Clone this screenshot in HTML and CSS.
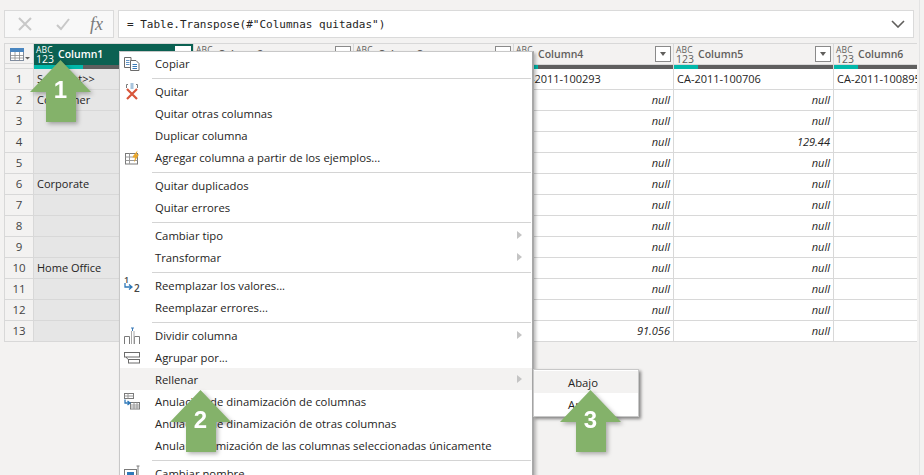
FILE: index.html
```html
<!DOCTYPE html>
<html lang="es">
<head>
<meta charset="utf-8">
<title>Power Query</title>
<link rel="stylesheet" href="styles.css">
</head>
<body>
<div class="app">
  <div class="formula-row">
    <div class="formula-btns">
      <svg class="fb-icon" width="16" height="16" viewBox="0 0 16 16"><path d="M2 2L14 14M14 2L2 14" stroke="#c8c8c8" stroke-width="2" fill="none"/></svg>
      <svg class="fb-icon" width="16" height="16" viewBox="0 0 16 16"><path d="M2 9L6 13L14 3" stroke="#c8c8c8" stroke-width="2" fill="none"/></svg>
      <span class="fx">fx</span>
    </div>
    <div class="formula-box">
      <span class="formula-text">= Table.Transpose(#"Columnas quitadas")</span>
      <svg width="14" height="8" viewBox="0 0 14 8"><path d="M1 1L7 7L13 1" stroke="#605e5c" stroke-width="1.6" fill="none"/></svg>
    </div>
  </div>

  <div class="grid">
    <div class="corner">
      <svg width="20" height="13" viewBox="0 0 20 13"><rect x=".5" y=".5" width="13" height="12" fill="#fff" stroke="#7f8ca0"/><rect x="0" y="0" width="14" height="4" fill="#4a86c0"/><path d="M5 4V13M9.500 4V13M0 7.500H14M0 10H14" stroke="#8a8a8a" stroke-width=".8"/><path d="M15 9H20L17.500 11.500Z" fill="#605e5c"/></svg>
    </div>
    <div class="head selected"><span class="type"><b>ABC</b><b>123</b></span><span class="name">Column1</span><span class="filter"></span><span class="quality"><i class="wide"></i></span></div>
    <div class="head"><span class="type"><b>ABC</b><b>123</b></span><span class="name">Column2</span><span class="filter"></span><span class="quality"><i></i></span></div>
    <div class="head"><span class="type"><b>ABC</b><b>123</b></span><span class="name">Column3</span><span class="filter"></span><span class="quality"><i></i></span></div>
    <div class="head"><span class="type"><b>ABC</b><b>123</b></span><span class="name">Column4</span><span class="filter"></span><span class="quality"><i></i></span></div>
    <div class="head"><span class="type"><b>ABC</b><b>123</b></span><span class="name">Column5</span><span class="filter"></span><span class="quality"><i></i></span></div>
    <div class="head clip"><span class="type"><b>ABC</b><b>123</b></span><span class="name">Column6</span><span class="quality"><i></i></span></div>

    <div class="num">1</div><div class="cell sel">Segment&gt;&gt;</div><div class="cell">CA-2011-100006</div><div class="cell">CA-2011-100090</div><div class="cell">CA-2011-100293</div><div class="cell">CA-2011-100706</div><div class="cell last">CA-2011-100895</div>
    <div class="num">2</div><div class="cell sel">Consumer</div><div class="cell nul">null</div><div class="cell nul">null</div><div class="cell nul">null</div><div class="cell nul">null</div><div class="cell last"></div>
    <div class="num">3</div><div class="cell sel"></div><div class="cell nul">null</div><div class="cell nul">null</div><div class="cell nul">null</div><div class="cell nul">null</div><div class="cell last"></div>
    <div class="num">4</div><div class="cell sel"></div><div class="cell nul">null</div><div class="cell nul">null</div><div class="cell nul">null</div><div class="cell nul">129.44</div><div class="cell last"></div>
    <div class="num">5</div><div class="cell sel"></div><div class="cell nul">null</div><div class="cell nul">null</div><div class="cell nul">null</div><div class="cell nul">null</div><div class="cell last"></div>
    <div class="num">6</div><div class="cell sel">Corporate</div><div class="cell nul">null</div><div class="cell nul">null</div><div class="cell nul">null</div><div class="cell nul">null</div><div class="cell last"></div>
    <div class="num">7</div><div class="cell sel"></div><div class="cell nul">null</div><div class="cell nul">null</div><div class="cell nul">null</div><div class="cell nul">null</div><div class="cell last"></div>
    <div class="num">8</div><div class="cell sel"></div><div class="cell nul">null</div><div class="cell nul">null</div><div class="cell nul">null</div><div class="cell nul">null</div><div class="cell last"></div>
    <div class="num">9</div><div class="cell sel"></div><div class="cell nul">null</div><div class="cell nul">null</div><div class="cell nul">null</div><div class="cell nul">null</div><div class="cell last"></div>
    <div class="num">10</div><div class="cell sel">Home Office</div><div class="cell nul">null</div><div class="cell nul">null</div><div class="cell nul">null</div><div class="cell nul">null</div><div class="cell last"></div>
    <div class="num">11</div><div class="cell sel"></div><div class="cell nul">null</div><div class="cell nul">null</div><div class="cell nul">null</div><div class="cell nul">null</div><div class="cell last"></div>
    <div class="num">12</div><div class="cell sel"></div><div class="cell nul">null</div><div class="cell nul">null</div><div class="cell nul">null</div><div class="cell nul">null</div><div class="cell last"></div>
    <div class="num">13</div><div class="cell sel"></div><div class="cell nul">null</div><div class="cell nul">null</div><div class="cell nul">91.056</div><div class="cell nul">null</div><div class="cell last"></div>
  </div>
</div>

<div class="menu">
  <div class="item"><span class="ic"><svg width="18" height="18" viewBox="0 0 18 18"><path d="M1.500 3.500H8V13.500H1.500Z" fill="#fff" stroke="#6b6b6b"/><path d="M3 6.500H6.500M3 8.500H6.500M3 10.500H6.500" stroke="#3a7ab8" stroke-width=".8"/><path d="M7.500 6.500H13L16 9.500V16.500H7.500Z" fill="#fff" stroke="#6b6b6b"/><path d="M9.500 10.500H14M9.500 12.500H14M9.500 14.500H14" stroke="#3a7ab8"/></svg></span>Copiar</div>
  <div class="sep"></div>
  <div class="item"><span class="ic"><svg width="18" height="18" viewBox="0 0 18 18"><path d="M3.500 6V2.500H5M13 2.500H14.500V6" stroke="#7a7a7a" fill="none"/><rect x="7.500" y="1" width="3" height="6" fill="#a9c4dc"/><path d="M4 7L14 17M14 7L4 17" stroke="#d8553a" stroke-width="2.200"/></svg></span>Quitar</div>
  <div class="item"><span class="ic"></span>Quitar otras columnas</div>
  <div class="item"><span class="ic"></span>Duplicar columna</div>
  <div class="item"><span class="ic"><svg width="18" height="18" viewBox="0 0 18 18"><rect x="2.500" y="5.500" width="12" height="10.500" fill="#fff" stroke="#7a7a7a"/><path d="M2.500 9H14.500M2.500 12.500H14.500M6.500 5.500V16" stroke="#9a9a9a"/><path d="M10 8L14.500 2.500L13.500 6.500H16L11 14.500L12 9.500H9.500Z" fill="#eaa72a"/></svg></span>Agregar columna a partir de los ejemplos...</div>
  <div class="sep"></div>
  <div class="item"><span class="ic"></span>Quitar duplicados</div>
  <div class="item"><span class="ic"></span>Quitar errores</div>
  <div class="sep"></div>
  <div class="item"><span class="ic"></span>Cambiar tipo<i class="chev"></i></div>
  <div class="item"><span class="ic"></span>Transformar<i class="chev"></i></div>
  <div class="sep"></div>
  <div class="item"><span class="ic"><span class="swap"><span class="one">1</span><svg width="9" height="8" viewBox="0 0 9 8"><path d="M1 0V4H8M5 1.500L8 4L5 6.500" stroke="#2f79b9" stroke-width="1.300" fill="none"/></svg><span class="two">2</span></span></span>Reemplazar los valores...</div>
  <div class="item"><span class="ic"></span>Reemplazar errores...</div>
  <div class="sep"></div>
  <div class="item"><span class="ic"><svg width="18" height="18" viewBox="0 0 18 18"><path d="M1.500 18V10.500H6.500V18M11.500 18V10.500H16.500V18" stroke="#7a7a7a" fill="none"/><path d="M8.500 18V5M11 18V5" stroke="#a8a8a8" fill="none"/><path d="M9.500 2V5M8 2H11" stroke="#3a7ab8"/></svg></span>Dividir columna<i class="chev"></i></div>
  <div class="item"><span class="ic"><svg width="18" height="18" viewBox="0 0 18 18"><rect x="1.500" y="4.500" width="15" height="4.500" fill="#fff" stroke="#6b6b6b"/><rect x="5.500" y="11.500" width="11" height="3.500" fill="#fff" stroke="#6b6b6b"/><path d="M3.500 9V10L5.500 11.500" stroke="#6b6b6b" fill="none"/></svg></span>Agrupar por...</div>
  <div class="item hover"><span class="ic"></span>Rellenar<i class="chev"></i></div>
  <div class="item"><span class="ic"><svg width="18" height="18" viewBox="0 0 18 18"><rect x="1.500" y="1.500" width="9" height="5" fill="#fff" stroke="#7a7a7a"/><path d="M1.500 4H10.500M5 1.500V6.500" stroke="#9a9a9a"/><rect x="7.500" y="10.500" width="9" height="6.500" fill="#fff" stroke="#7a7a7a"/><path d="M7.500 13H16.500M7.500 15H16.500M11 10.500V17M14 10.500V17" stroke="#9a9a9a"/><path d="M2 7.500V11H7M4.500 9L7 11L4.500 13" stroke="#2f79b9" stroke-width="1.300" fill="none"/></svg></span>Anulación de dinamización de columnas</div>
  <div class="item"><span class="ic"></span>Anulación de dinamización de otras columnas</div>
  <div class="item"><span class="ic"></span>Anular dinamización de las columnas seleccionadas únicamente</div>
  <div class="sep"></div>
  <div class="item"><span class="ic"><svg width="18" height="18" viewBox="0 0 18 18"><rect x="1.500" y="5.500" width="12" height="11" fill="#fff" stroke="#7a7a7a"/><rect x="4" y="8" width="7" height="8" fill="#2f79b9"/><path d="M15 2V16M13.500 2H16.500" stroke="#7a7a7a"/></svg></span>Cambiar nombre</div>
</div>

<div class="submenu">
  <div class="sub-item hover">Abajo</div>
  <div class="sub-item">Arriba</div>
</div>

<div class="arrow a1"><svg width="61" height="62" viewBox="0 0 61 62"><path d="M30.500 0L61 32H46V62H16V32H0Z" fill="#84b26a"/></svg><span>1</span></div>
<div class="arrow a2"><svg width="61" height="62" viewBox="0 0 61 62"><path d="M30.500 0L61 32H46V62H16V32H0Z" fill="#84b26a"/></svg><span>2</span></div>
<div class="arrow a3"><svg width="61" height="62" viewBox="0 0 61 62"><path d="M30.500 0L61 32H46V62H16V32H0Z" fill="#84b26a"/></svg><span>3</span></div>
</body>
</html>
```
FILE: styles.css
```css
html, body { margin: 0; height: 475px; overflow: hidden; }
body { background: #f3f2f1; font-family: "Open Sans", "Noto Sans", sans-serif; color: #252423; position: relative; }
.app { width: 920px; height: 475px; padding: 10px 5px 0 4px; box-sizing: border-box; border-right: 1px solid #e3e3e3; overflow: hidden; }

.formula-row { display: flex; gap: 4px; height: 28px; }
.formula-btns { width: 110px; box-sizing: border-box; background: #f8f8f8; border: 1px solid #dadada; display: flex; align-items: center; padding-left: 12px; }
.fb-icon { margin-right: 22px; flex: none; }
.fb-icon + .fb-icon { margin-right: 19px; }
.fx { font-family: "Liberation Serif", serif; font-style: italic; font-size: 18px; color: #7a7a7a; }
.formula-box { flex: 1; background: #fff; border: 1px solid #dadada; display: flex; align-items: center; justify-content: space-between; padding: 0 8px 0 8px; }
.formula-text { font-family: "DejaVu Sans Mono", monospace; font-size: 11px; color: #252423; }

.grid { display: grid; grid-template-columns: 30px repeat(5, 160px) 83px; grid-template-rows: 25px repeat(13, 21px); margin-top: 5px; border-top: 1px solid #d8d8d8; font-size: 11px; width: 913px; overflow: hidden; }
.corner { position: relative; background: #f3f2f1; border-left: 1px solid #d8d8d8; border-right: 1px solid #d8d8d8; border-bottom: 1px solid #d8d8d8; display: flex; align-items: flex-start; padding: 4px 0 0 5px; box-sizing: border-box; }
.corner::after { content: ""; position: absolute; left: 0; right: 0; bottom: 4px; height: 1px; background: #d8d8d8; }
.head { position: relative; background: #f3f2f1; border-right: 1px solid #d8d8d8; display: flex; align-items: flex-start; padding: 1px 0 0 2px; box-sizing: border-box; overflow: hidden; color: #605e5c; }
.head.clip { border-right: 0; }
.head.selected { background: #0b6152; color: #fff; }
.type { display: flex; flex-direction: column; width: 20px; flex: none; line-height: 9px; }
.type b { font-weight: 400; font-size: 8.500px; letter-spacing: .2px; }
.type b + b { font-size: 10.500px; line-height: 10px; letter-spacing: 0; }
.name { font-weight: 600; font-size: 10.500px; margin: 2px 0 0 2px; }
.filter { position: absolute; right: 2px; top: 2px; width: 16px; height: 16px; box-sizing: border-box; background: #fff; border: 1px solid #8a8a8a; }
.filter::after { content: ""; position: absolute; left: 4px; top: 5px; border: 3.500px solid transparent; border-top: 4px solid #605e5c; border-bottom: 0; }
.selected .filter { border-color: #fff; }
.quality { position: absolute; left: 0; right: 0; bottom: 0; height: 4px; background: #5f5f5f; display: block; }
.quality i { display: block; height: 4px; width: 24px; background: #01b8aa; }
.quality i.wide { width: 49px; }
.head::after { content: ""; position: absolute; left: 0; right: 0; bottom: 4px; height: 1px; background: #d8d8d8; }
.head.selected::after { display: none; }

.num { background: #f3f2f1; border-left: 1px solid #d8d8d8; border-right: 1px solid #d8d8d8; border-bottom: 1px solid #d8d8d8; display: flex; align-items: center; justify-content: center; color: #444; font-size: 11.500px; box-sizing: border-box; padding-bottom: 2px; }
.cell { background: #fff; border-right: 1px solid #d8d8d8; border-bottom: 1px solid #d8d8d8; display: flex; align-items: center; padding: 0 3px 2px; box-sizing: border-box; white-space: nowrap; overflow: hidden; color: #252423; }
.cell.sel { background: #e6e6e6; }
.cell.nul { justify-content: flex-end; font-style: italic; color: #252423; }
.cell.last { border-right: 0; }

.menu { position: absolute; left: 119px; top: 51px; width: 415px; height: 440px; box-sizing: border-box; background: #fff; border: 1px solid #c8c8c8; border-right: 2px solid #a8a8a8; display: flex; flex-direction: column; font-size: 11.300px; box-shadow: 2px 2px 3px rgba(0,0,0,.25); }
.item { position: relative; flex: none; height: 22px; display: flex; align-items: center; white-space: nowrap; }
.item.hover { background: #f3f2f1; }
.ic { flex: none; width: 35px; padding-left: 3px; box-sizing: border-box; display: flex; align-items: center; height: 18px; }
.sep { flex: none; height: 1px; margin: 4px 1px 1px 32px; background: #d4d4d4; }
.chev { position: absolute; left: 397px; top: 7px; border-left: 5px solid #c4c4c4; border-top: 4px solid transparent; border-bottom: 4px solid transparent; }
.swap { position: relative; display: block; width: 18px; height: 18px; font-family: "Open Sans", sans-serif; font-size: 9px; font-weight: 600; color: #444; }
.swap svg { position: absolute; left: 1px; top: 7px; }
.one { position: absolute; left: 1px; top: -3px; }
.two { position: absolute; left: 11px; top: 5px; font-size: 10px; }

.submenu { position: absolute; left: 533px; top: 369px; width: 106px; height: 48px; box-sizing: border-box; background: #fff; border: 1px solid #c8c8c8; font-size: 11.300px; box-shadow: 2px 2px 3px rgba(0,0,0,.45); padding-top: 1px; }
.sub-item { height: 22px; display: flex; align-items: center; padding-left: 34px; }
.sub-item.hover { background: #f3f2f1; }

.arrow { position: absolute; width: 61px; height: 62px; display: flex; justify-content: center; filter: drop-shadow(2px 2px 2px rgba(0,0,0,.3)); }
.arrow svg { position: absolute; left: 0; top: 0; }
.arrow span { position: relative; font-family: "Liberation Sans", sans-serif; font-weight: 700; font-size: 24px; color: #fff; line-height: 28px; margin-top: 16px; }
.a1 { left: 30px; top: 60px; }
.a2 { left: 170px; top: 390px; }
.a3 { left: 560px; top: 390px; }
```
